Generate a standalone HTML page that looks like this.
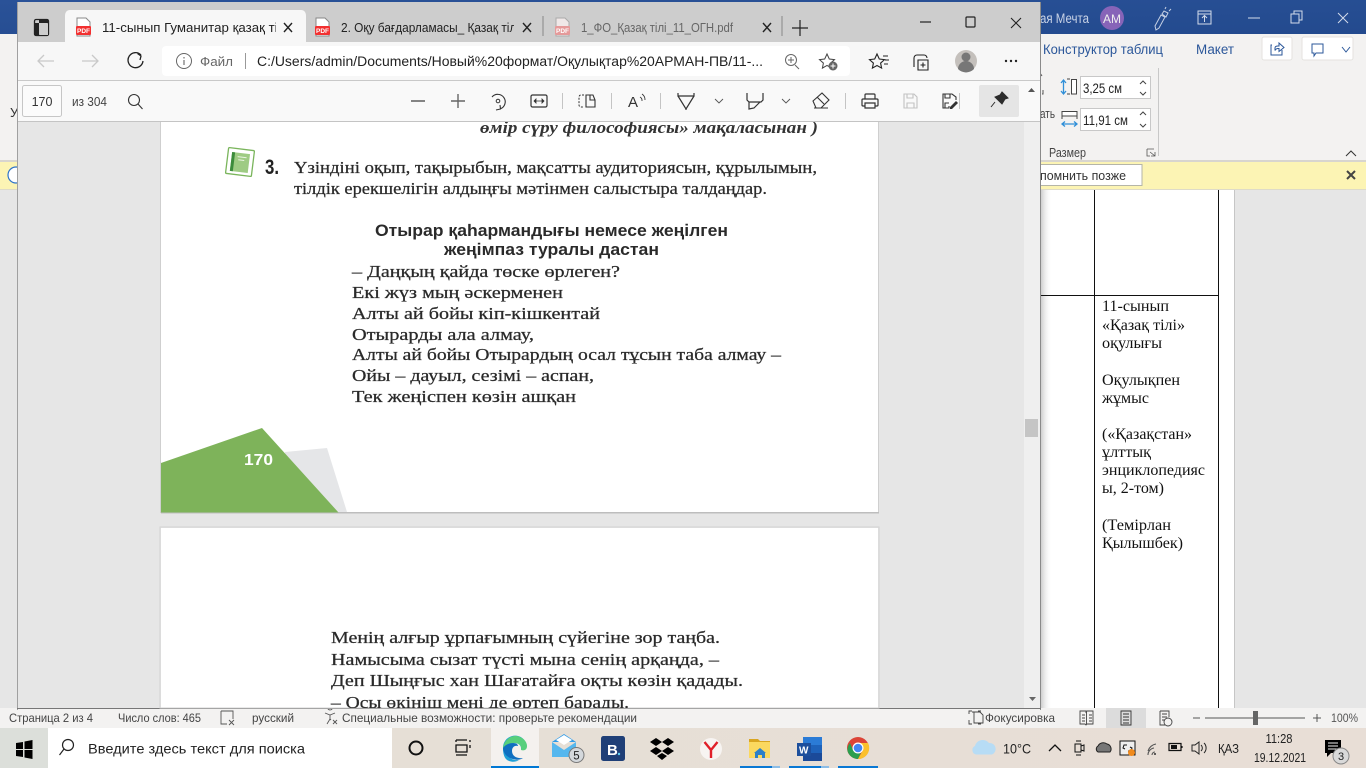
<!DOCTYPE html>
<html><head><meta charset="utf-8"><style>
html,body{margin:0;padding:0;width:1366px;height:768px;overflow:hidden;background:#e6e6e6}
svg{display:block}
text{font-family:"Liberation Sans","Noto Sans CJK SC",sans-serif;white-space:pre}
.s{font-family:"Liberation Serif",serif}
.b{font-family:"Liberation Serif",serif;font-size:17px;fill:#2a2a2a;stroke:#2a2a2a;stroke-width:.25}
.c{font-family:"Liberation Serif",serif;font-size:15.500px;fill:#111}
</style></head><body>
<svg width="1366" height="768" viewBox="0 0 1366 768" xmlns="http://www.w3.org/2000/svg">
<defs>
<clipPath id="c1"><rect x="100" y="10" width="176" height="34"/></clipPath>
<clipPath id="c2"><rect x="340" y="10" width="174" height="34"/></clipPath>
<clipPath id="c3"><rect x="161" y="122" width="717" height="586"/></clipPath>
<linearGradient id="tb" x1="0" x2="1" y1="0" y2="0"><stop offset="0" stop-color="#d9dcd8"/><stop offset=".3" stop-color="#e6dfd6"/><stop offset="1" stop-color="#e8ded6"/></linearGradient>
<linearGradient id="sh" x1="0" x2="1" y1="0" y2="0"><stop offset="0" stop-color="#c4c4c4"/><stop offset="1" stop-color="#fff" stop-opacity="0"/></linearGradient>
<linearGradient id="bl" x1="0" x2="1" y1="0" y2="1"><stop offset="0" stop-color="#2a5298"/><stop offset="1" stop-color="#234a8e"/></linearGradient>
</defs>

<!-- WORD BACKGROUND -->
<rect width="1366" height="34" fill="url(#bl)"/>
<rect y="34" width="1366" height="127" fill="#f3f2f1"/>
<rect y="160" width="1366" height="2" fill="#d8d5cf"/>
<rect y="162" width="1366" height="28" fill="#fcf4b4"/>
<rect y="190" width="1366" height="518" fill="#e6e6e6"/>
<rect y="189" width="1366" height="1" fill="#dedbc8"/>
<text x="10" y="117" font-size="13" fill="#333">У</text>
<circle cx="16" cy="175" r="8" fill="#fff" stroke="#2f74c8" stroke-width="1.200"/>

<text x="1040" y="23" font-size="13.500" fill="#c9d3e6" textLength="49" lengthAdjust="spacingAndGlyphs">ая Мечта</text>
<circle cx="1112" cy="18" r="12" fill="#8764b8"/>
<text x="1112" y="23" font-size="12" fill="#eee" text-anchor="middle">АМ</text>
<path d="M1156 30l-1-4 6-11 4 2-6 11zM1162 14l2-3 4 2-2 4zM1165 9l1-2M1169 11l2-2" fill="none" stroke="#c5d0e4" stroke-width="1"/>
<path d="M1198 11h13v13h-13zM1198 14h13M1204.500 22v-6M1202 18l2.500-2.500 2.500 2.500" fill="none" stroke="#d3dbea" stroke-width="1"/>
<path d="M1248 18h12" stroke="#d3dbea" stroke-width="1"/>
<path d="M1291 14h8v9h-8zM1294 14v-3h8v9h-3" fill="none" stroke="#d3dbea" stroke-width="1"/>
<path d="M1338 13l10 10M1348 13l-10 10" stroke="#d3dbea" stroke-width="1"/>

<text x="1043" y="54" font-size="13.500" fill="#2b579a" textLength="120" lengthAdjust="spacingAndGlyphs">Конструктор таблиц</text>
<text x="1196" y="54" font-size="13.500" fill="#2b579a" textLength="38" lengthAdjust="spacingAndGlyphs">Макет</text>
<rect x="1262" y="37" width="30" height="23" rx="2" fill="#fff" stroke="#e4e2df"/>
<path d="M1272 45h-1v10h11v-5M1275 50v-2q0-2 3-2h1v-3l5 4.500-5 4v-3h-1q-2 0-3 2z" fill="none" stroke="#2b579a" stroke-width="1"/>
<rect x="1302" y="37" width="51" height="23" rx="2" fill="#fff" stroke="#e4e2df"/>
<path d="M1312 44h11v9h-7l-2 3v-3h-2z" fill="none" stroke="#2b579a" stroke-width="1"/>
<path d="M1342 47l4 5 4-5" fill="none" stroke="#2b579a" stroke-width="1"/>

<path d="M1040 73l2 3M1042 94h1v-4" fill="none" stroke="#555"/>
<path d="M1063.500 80v14M1061 83l2.500-3 2.500 3M1061 91l2.500 3 2.500-3" fill="none" stroke="#2f8fd8" stroke-width="1.300"/>
<path d="M1067 79h3M1067 94h3" stroke="#444"/>
<rect x="1071.500" y="79.500" width="5" height="14.500" fill="#fff" stroke="#444"/>
<rect x="1080.500" y="76.500" width="70" height="22" fill="#fff" stroke="#c8c8c8"/>
<text x="1083" y="93" font-size="13.500" fill="#222" textLength="39" lengthAdjust="spacingAndGlyphs">3,25 см</text>
<path d="M1140 84l3-3 3 3M1140 92l3 3 3-3" fill="none" stroke="#444"/>
<text x="1040" y="118" font-size="13" fill="#444" textLength="15" lengthAdjust="spacingAndGlyphs">ать</text>
<rect x="1062" y="111.500" width="15" height="4.500" fill="#fff" stroke="#444"/>
<path d="M1062 116v3M1077 116v3" stroke="#444"/>
<path d="M1062 124h15M1065 121.500l-3 2.500 3 2.500M1074 121.500l3 2.500-3 2.500" fill="none" stroke="#2f8fd8" stroke-width="1.300"/>
<rect x="1080.500" y="108.500" width="70" height="22" fill="#fff" stroke="#c8c8c8"/>
<text x="1083" y="125" font-size="13.500" fill="#222" textLength="45" lengthAdjust="spacingAndGlyphs">11,91 см</text>
<path d="M1140 115l3-3 3 3M1140 124l3 3 3-3" fill="none" stroke="#444"/>
<path d="M1158.500 68v88" stroke="#c8c8c8"/>
<text x="1049" y="157" font-size="12.500" fill="#444" textLength="37" lengthAdjust="spacingAndGlyphs">Размер</text>
<path d="M1147 149h7M1147 149v7h3M1150 152l5 4M1155 152v4h-4" fill="none" stroke="#555" stroke-width=".8"/>
<path d="M1346 156l5-5 5 5" fill="none" stroke="#333"/>
<rect x="1030" y="164.500" width="112" height="21" fill="#fff" stroke="#b5b5a8"/>
<text x="1040" y="180" font-size="12.500" fill="#333" textLength="86" lengthAdjust="spacingAndGlyphs">помнить позже</text>
<path d="M1347 171l8 8M1355 171l-8 8" stroke="#444" stroke-width="2"/>

<rect x="1040" y="190" width="195" height="518" fill="#fff"/>
<rect x="1040" y="190" width="12" height="518" fill="url(#sh)"/>
<rect x="1234" y="190" width="1" height="518" fill="#c6c6c6"/>
<path d="M1094.500 190v518M1218.500 190v518" stroke="#111" stroke-width="1"/>
<path d="M1040 295.500h178" stroke="#111" stroke-width="1"/>
<text class="c" x="1102" y="311" textLength="67" lengthAdjust="spacingAndGlyphs">11-сынып</text>
<text class="c" x="1102" y="330" textLength="83" lengthAdjust="spacingAndGlyphs">«Қазақ тілі»</text>
<text class="c" x="1102" y="348" textLength="60" lengthAdjust="spacingAndGlyphs">оқулығы</text>
<text class="c" x="1102" y="385" textLength="78" lengthAdjust="spacingAndGlyphs">Оқулықпен</text>
<text class="c" x="1102" y="403" textLength="47" lengthAdjust="spacingAndGlyphs">жұмыс</text>
<text class="c" x="1102" y="439" textLength="90" lengthAdjust="spacingAndGlyphs">(«Қазақстан»</text>
<text class="c" x="1102" y="457" textLength="49" lengthAdjust="spacingAndGlyphs">ұлттық</text>
<text class="c" x="1102" y="475" textLength="103" lengthAdjust="spacingAndGlyphs">энциклопедияс</text>
<text class="c" x="1102" y="493" textLength="62" lengthAdjust="spacingAndGlyphs">ы, 2-том)</text>
<text class="c" x="1102" y="530" textLength="69" lengthAdjust="spacingAndGlyphs">(Темірлан</text>
<text class="c" x="1102" y="548" textLength="81" lengthAdjust="spacingAndGlyphs">Қылышбек)</text>

<!-- STATUS BAR -->
<rect y="708" width="1366" height="20" fill="#f3f2f1"/>
<text x="9" y="722" font-size="12" fill="#444" textLength="84" lengthAdjust="spacingAndGlyphs">Страница 2 из 4</text>
<text x="118" y="722" font-size="12" fill="#444" textLength="83" lengthAdjust="spacingAndGlyphs">Число слов: 465</text>
<path d="M221 711h12v8M221 711v13h6M229 720l5 5M234 720l-5 5" fill="none" stroke="#555" stroke-width=".9"/>
<text x="252" y="722" font-size="12" fill="#444" textLength="42" lengthAdjust="spacingAndGlyphs">русский</text>
<path d="M330 710a2.500 2.500 0 1 1 .1 0M325 713l5 2 5-2M330 715v4l-3 5M330 719l1 1M333 720l4 4M337 720l-4 4" fill="none" stroke="#555" stroke-width=".9"/>
<text x="342" y="722" font-size="12" fill="#444" textLength="295" lengthAdjust="spacingAndGlyphs">Специальные возможности: проверьте рекомендации</text>
<path d="M969 714v-3h3M969 720v4h3M981 711h-3M981 724h-3M972 712h8l3 3v8h-9v-11" fill="none" stroke="#444" stroke-width=".9"/>
<text x="985" y="722" font-size="12" fill="#444" textLength="70" lengthAdjust="spacingAndGlyphs">Фокусировка</text>
<path d="M1080 711h6v1l1-1h6v13h-6l-1 1-1-1h-5zM1086.500 712v12M1082 715h3M1082 718h3M1082 721h3M1089 715h3M1089 718h3M1089 721h3" fill="none" stroke="#444" stroke-width=".9"/>
<rect x="1106" y="708" width="40" height="20" fill="#dcdcdc"/>
<path d="M1121 711h10v14h-10zM1123 714h6M1123 717h6M1123 720h6M1123 723h6" fill="none" stroke="#333" stroke-width=".9"/>
<path d="M1160 711h9v6M1160 711v14h5M1162 714h5M1162 717h5M1162 720h3" fill="none" stroke="#444" stroke-width=".9"/>
<circle cx="1168" cy="722" r="4" fill="none" stroke="#444" stroke-width=".9"/>
<path d="M1193 718h7M1205 718h100" stroke="#555"/>
<rect x="1253" y="711" width="5" height="14" fill="#666"/>
<path d="M1313 718h8M1317 714v8" stroke="#555"/>
<text x="1331" y="722" font-size="12" fill="#555" textLength="27" lengthAdjust="spacingAndGlyphs">100%</text>

<!-- TASKBAR -->
<rect y="728" width="1366" height="40" fill="url(#tb)"/>
<rect x="0" y="728" width="48" height="40" fill="#dcdfda"/>
<path d="M16 743l7-1v7h-7zM24.500 741.500l8-1.500v9h-8zM16 750h7v7l-7-1zM24.500 750h8v9l-8-1.500z" fill="#000"/>
<rect x="48" y="728" width="344" height="40" fill="#fff"/>
<circle cx="68" cy="745" r="5.500" fill="none" stroke="#222" stroke-width="1.200"/>
<path d="M64 749l-4.500 6" stroke="#222" stroke-width="1.200"/>
<text x="88" y="753.500" font-size="14" fill="#222" textLength="217" lengthAdjust="spacingAndGlyphs">Введите здесь текст для поиска</text>
<circle cx="416" cy="748" r="6.500" fill="none" stroke="#111" stroke-width="2"/>
<path d="M456 740h11M456 755h11M456 745h11v7h-11zM470 740v2M470 745v3M456 740v2" fill="none" stroke="#111" stroke-width="1.300"/>
<rect x="491" y="728" width="48" height="40" fill="#f4f1ee"/>
<rect x="491" y="766" width="48" height="2" fill="#0078d4"/>
<path d="M503 748a12 12 0 0 1 22-7c3 4 2 9-2 9-2 0-2-1-2-2 0-3-3-5-7-5-5 0-8 3-8 7 0 6 6 11 13 10-3 2-6 2-8 1.500-7-1-8-8-8-13.500z" fill="#1f9fd6"/>
<path d="M503 748c1-8 8-13 14-12 5 1 10 5 10 10 0 4-3 5-6 4 1-4-2-7-6-7-5 0-9 2-12 5z" fill="#57cf7c"/>
<path d="M503 748c2-3 6-5 10-5 4 0 5 2 5 3-3-1-6 1-6 5 0 5 5 8 11 7-3 2-6 2-8 1.500-7-1-12-6-12-11.500z" fill="#0f6fc0"/>
<path d="M552 742l12-8 12 8z" fill="#2f9be8"/>
<path d="M552 742v15h24v-15l-12 8z" fill="#55b7ee"/>
<path d="M556 740l8-5 8 5-8 5z" fill="#fff"/>
<circle cx="576.500" cy="755" r="7.500" fill="#d4d8dc" stroke="#777"/>
<text x="576.500" y="759.500" font-size="11.500" fill="#222" text-anchor="middle">5</text>
<rect x="601" y="736" width="24" height="25" rx="2.500" fill="#1f3f77"/>
<text x="607" y="755" font-size="15" font-weight="bold" fill="#fff">B</text><circle cx="619" cy="754" r="1.200" fill="#5fd0f5"/>
<path d="M656 738l6 4-6 4-6-4zM668 738l6 4-6 4-6-4zM656 747l6 4-6 4-6-4zM668 747l6 4-6 4-6-4zM662 753l5 3-5 4-5-4z" fill="#000"/>
<circle cx="711" cy="749" r="11" fill="#f7f4f2"/>
<path d="M704.500 742l6.500 8 6.500-8M711 750v8" fill="none" stroke="#e0202a" stroke-width="2.400"/>
<rect x="740" y="766" width="40" height="2" fill="#0a78d4"/><rect x="772" y="766" width="8" height="2" fill="#8dbde6"/>
<path d="M749 739h9l2 2h10v5h-21z" fill="#d9a520"/>
<path d="M749 742h21v16h-21z" fill="#fbd85f"/>
<path d="M755 758v-5h-1l6-5 6 5h-1v5h-3v-3h-4v3z" fill="#2c7fc8"/>
<rect x="789" y="766" width="40" height="2" fill="#0a78d4"/><rect x="821" y="766" width="8" height="2" fill="#8dbde6"/>
<rect x="803" y="737" width="19" height="24" fill="#2b7bd6"/><rect x="803" y="753" width="19" height="8" fill="#1b4a99"/><rect x="803" y="745" width="19" height="8" fill="#1e62ba"/>
<rect x="797" y="743" width="14" height="13" fill="#1d4f9c"/><text x="799" y="753.500" font-size="10" font-weight="bold" fill="#fff">W</text>
<rect x="838" y="766" width="40" height="2" fill="#0a78d4"/>
<circle cx="858" cy="748" r="11" fill="#dc4437"/>
<path d="M847.500 751a11 11 0 0 0 10.500 8l5-11h-5l-5 2-3-7a11 11 0 0 0-2.500 8z" fill="#2a9e4f"/>
<path d="M858 743h10a11 11 0 0 1-10 16l5-9z" fill="#fbc02d"/>
<circle cx="858" cy="748" r="5.500" fill="#fff"/><circle cx="858" cy="748" r="4.300" fill="#4285f4"/>
<path d="M976 754.500a4.500 4.500 0 0 1-1-8.500 8 8 0 0 1 14-3 6 6 0 0 1 3 11.500z" fill="#b7dcf5"/>
<text x="1003" y="753.500" font-size="14" fill="#222" textLength="28" lengthAdjust="spacingAndGlyphs">10°C</text>
<path d="M1049 751l6-6 6 6" fill="none" stroke="#111" stroke-width="1.300"/>
<path d="M1075 744h6v8h-6zM1081 746l3-1v6l-3-1M1076 741h5M1076 755h5" fill="none" stroke="#111" stroke-width="1"/>
<path d="M1098 752a3.500 3.500 0 0 1 0-6 6 6 0 0 1 9-2 5 5 0 0 1 3 8z" fill="#777" stroke="#222"/>
<path d="M1120 741h15v14h-15z" fill="#eee" stroke="#111"/>
<path d="M1127 745h-3l-1 3 2 1M1128 751h3l1-3-2-1" fill="none" stroke="#111"/>
<circle cx="1131.500" cy="752.500" r="3.500" fill="#f08a1d"/>
<path d="M1148 755a7 7 0 0 1 6-7M1148 751a10 10 0 0 1 8-7M1152 755a3 3 0 0 1 3-3" fill="none" stroke="#555" stroke-width="1.100"/>
<circle cx="1155" cy="754" r="1" fill="#333"/>
<path d="M1169 743.500h12v7h-12zM1182 746v2" fill="none" stroke="#111" stroke-width="1.200"/><rect x="1171" y="745" width="6" height="4" fill="#111"/>
<path d="M1192 745h3l4-3v12l-4-3h-3zM1201 745a4 4 0 0 1 0 6M1204 743a7 7 0 0 1 0 10" fill="none" stroke="#222" stroke-width="1"/>
<text x="1218" y="753" font-size="13" fill="#222" textLength="21" lengthAdjust="spacingAndGlyphs">ҚАЗ</text>
<text x="1279" y="743" font-size="12.500" fill="#222" text-anchor="middle" textLength="27" lengthAdjust="spacingAndGlyphs">11:28</text>
<text x="1280" y="762" font-size="12.500" fill="#222" text-anchor="middle" textLength="52" lengthAdjust="spacingAndGlyphs">19.12.2021</text>
<path d="M1325 740h16v13h-10l-4 4v-4h-2z" fill="#000"/>
<path d="M1328 743h10M1328 746h10M1328 749h10" stroke="#eee"/>
<circle cx="1341" cy="756" r="8" fill="#d9d9d9" stroke="#888"/>
<text x="1341" y="760" font-size="11" fill="#222" text-anchor="middle">3</text>

<!-- BROWSER WINDOW -->
<rect x="17.500" y="2" width="1023" height="707" fill="#e6e6e6"/>
<rect x="18" y="2" width="1022" height="40" fill="#cdcdcd"/>
<rect x="34.500" y="19.500" width="14" height="16" rx="1.500" fill="none" stroke="#222" stroke-width="1.300"/>
<path d="M35 19.500h13v3.500h-13zM35 20v15h4V20z" fill="#222"/>
<rect x="40" y="24" width="8" height="11" fill="#cdcdcd"/>
<path d="M65 42c0 0 0-1 0-26 0-4 2-6 5-6h231c3 0 5 2 5 6v26z" fill="#f7f7f7"/>
<path d="M77 18h9l4 4v14H77z" fill="#fff" stroke="#888"/><rect x="76" y="26" width="15" height="9" rx="1" fill="#f23030"/>
<text x="83.500" y="33" font-size="6.500" font-weight="bold" fill="#fff" text-anchor="middle">PDF</text>
<g clip-path="url(#c1)"><text x="102" y="32" font-size="12.800" fill="#222" textLength="190" lengthAdjust="spacingAndGlyphs">11-сынып Гуманитар қазақ тілі.</text></g>
<path d="M284 23l8 9M292 23l-8 9" stroke="#222" stroke-width="1.400"/>
<path d="M316 18h9l4 4v14h-13z" fill="#fff" stroke="#888"/><rect x="315" y="26" width="15" height="9" rx="1" fill="#f23030"/>
<text x="322.500" y="33" font-size="6.500" font-weight="bold" fill="#fff" text-anchor="middle">PDF</text>
<g clip-path="url(#c2)"><text x="341" y="32" font-size="12.800" fill="#222" textLength="178" lengthAdjust="spacingAndGlyphs">2. Оқу бағдарламасы_ Қазақ тілі</text></g>
<path d="M523 23l8 9M531 23l-8 9" stroke="#222" stroke-width="1.400"/>
<path d="M543 16v20" stroke="#888"/>
<path d="M556 18h9l4 4v14h-13z" fill="#f0e8e8" stroke="#aaa"/><rect x="555" y="26" width="15" height="9" rx="1" fill="#e59a9a"/>
<text x="562.500" y="33" font-size="6.500" font-weight="bold" fill="#fff" text-anchor="middle">PDF</text>
<text x="581" y="32" font-size="13" fill="#666" textLength="152" lengthAdjust="spacingAndGlyphs">1_ФО_Қазақ тілі_11_ОГН.pdf</text>
<path d="M763 23l8 9M771 23l-8 9" stroke="#222" stroke-width="1.400"/>
<path d="M782 16v20" stroke="#888"/>
<path d="M800 20v16M792 28h16" stroke="#222" stroke-width="1.200"/>
<path d="M920 22h11" stroke="#222" stroke-width="1.200"/>
<rect x="966" y="17" width="9" height="10" rx="1" fill="none" stroke="#222" stroke-width="1.200"/>
<path d="M1011 18l10 10M1021 18l-10 10" stroke="#222" stroke-width="1.100"/>

<rect x="18" y="42" width="1022" height="39" fill="#f7f7f7"/>
<rect x="18" y="80" width="1022" height="1" fill="#c9c9c9"/>
<path d="M38 61h16M44 55l-6 6 6 6" fill="none" stroke="#c9c9c9" stroke-width="1.300"/>
<path d="M82 61h16M92 55l6 6-6 6" fill="none" stroke="#c9c9c9" stroke-width="1.300"/>
<path d="M141 55a7.500 7.500 0 1 0 2 6M137.500 53.500l3.500 2.500-1 4" fill="none" stroke="#222" stroke-width="1.300"/>
<rect x="162" y="46" width="688" height="30" rx="4" fill="#fff"/>
<circle cx="184" cy="61" r="7.500" fill="none" stroke="#666"/><path d="M184 60v5M184 57v1.500" stroke="#666" stroke-width="1.100"/>
<text x="200" y="66" font-size="13" fill="#666" textLength="33" lengthAdjust="spacingAndGlyphs">Файл</text>
<path d="M245.500 53v16" stroke="#999"/>
<text x="257" y="66" font-size="13.500" fill="#222" textLength="506" lengthAdjust="spacingAndGlyphs">C:/Users/admin/Documents/Новый%20формат/Оқулықтар%20АРМАН-ПВ/11-...</text>
<circle cx="791" cy="60" r="5.500" fill="none" stroke="#666"/><path d="M795 65l4 4M788 60h6M791 57v6" stroke="#666"/>
<path d="M827 54l2.300 5 5.200.6-3.900 3.500 1 5-4.600-2.600-4.600 2.600 1-5-3.900-3.500 5.200-.6z" fill="none" stroke="#444"/>
<circle cx="833" cy="66" r="4.500" fill="#666"/><path d="M830.500 66h5M833 63.500v5" stroke="#fff"/>
<path d="M877 54l2.300 5 5.200.6-3.900 3.500 1 5-4.600-2.600-4.600 2.600 1-5-3.900-3.500 5.200-.6zM883 56h5M885 60h4M884 64h4" fill="none" stroke="#222" stroke-width="1.100"/>
<path d="M914 67v-9a3 3 0 0 1 3-3h7a3 3 0 0 1 3 3M918 60h10v10h-10zM923 62.500v5M920.500 65h5" fill="none" stroke="#222" stroke-width="1.100"/>
<circle cx="966" cy="61" r="11" fill="#c4c0bc"/>
<circle cx="966" cy="57" r="4.500" fill="#777"/><path d="M958 69a8 8 0 0 1 16 0 11 11 0 0 1-16 0z" fill="#777"/>
<circle cx="1006" cy="61" r="1.200" fill="#222"/><circle cx="1011" cy="61" r="1.200" fill="#222"/><circle cx="1016" cy="61" r="1.200" fill="#222"/>

<!-- PDF TOOLBAR -->
<rect x="18" y="81" width="1022" height="40" fill="#f9f9f9"/>
<rect x="18" y="121" width="1022" height="1" fill="#c4c4c4"/>
<rect x="22.500" y="85.500" width="39" height="31" rx="2" fill="#fbfbfb" stroke="#c6c6c6"/>
<text x="42" y="106" font-size="12.500" fill="#333" text-anchor="middle">170</text>
<text x="72" y="106" font-size="12.500" fill="#444" textLength="35" lengthAdjust="spacingAndGlyphs">из 304</text>
<circle cx="134" cy="100" r="5.500" fill="none" stroke="#333" stroke-width="1.100"/><path d="M138 104l4.500 5" stroke="#333" stroke-width="1.100"/>
<path d="M411 101h14" stroke="#666" stroke-width="1.600"/>
<path d="M451 101h14M458 94v14" stroke="#666" stroke-width="1.400"/>
<path d="M492 97a7.500 7.500 0 1 1 8 12M500 105l.5 4-4.500 1" fill="none" stroke="#333" stroke-width="1.100"/>
<circle cx="498" cy="101" r="1.800" fill="none" stroke="#333"/>
<rect x="531" y="95" width="16" height="12" rx="1.500" fill="none" stroke="#333" stroke-width="1.200"/>
<path d="M534 101h10M534 101l2-2v4zM544 101l-2-2v4z" fill="#333" stroke="#333" stroke-width=".8"/>
<path d="M562.500 93v16M611.500 93v16M660.500 93v16M845.500 93v16M959.500 93v16" stroke="#c4c4c4"/>
<path d="M584 95h-3a2 2 0 0 0-2 2v8a2 2 0 0 0 2 2h3" fill="none" stroke="#333" stroke-dasharray="2 1.400"/>
<path d="M586 95h7l2 5v7h-9zM590 95v5h5" fill="none" stroke="#333" stroke-width="1.100"/>
<text x="628" y="107" font-size="15" fill="#333">A</text>
<path d="M640 97a4 4 0 0 1 2 4M642 94a7 7 0 0 1 3 6" fill="none" stroke="#333" stroke-width=".9"/>
<path d="M678 93v3h16v-3M678 96l8 13 8-13M686 109v1" fill="none" stroke="#333" stroke-width="1.200"/>
<path d="M715 99l4 4 4-4M782 99l4 4 4-4" fill="none" stroke="#555" stroke-width=".9"/>
<path d="M747 93v7l2 2h12l2-2v-7M749 102v7l5-1 6-6" fill="none" stroke="#333" stroke-width="1.200"/>
<path d="M813 101l9-8 7 7-8 8h-5zM817 97l7 7M814 108h14" fill="none" stroke="#333" stroke-width="1.100"/>
<path d="M865 99v-4a1 1 0 0 1 1-1h8a1 1 0 0 1 1 1v4M865 106h-2a1 1 0 0 1-1-1v-5a1 1 0 0 1 1-1h14a1 1 0 0 1 1 1v5a1 1 0 0 1-1 1h-2M865 103h10v5h-10z" fill="none" stroke="#333" stroke-width="1.200"/>
<path d="M904 94h10l3 3v11h-13zM907 94v4h6v-4M907 108v-5h7v5" fill="none" stroke="#c2c2c2" stroke-width="1.100"/>
<path d="M949 106v2h-6v-14h9l4 3v3M945 94v4h5v-4M945 108v-5h4" fill="none" stroke="#333" stroke-width="1.100"/>
<path d="M950 107l6-6 2 2-6 6h-2z" fill="#333"/>
<rect x="979" y="85" width="40" height="32" rx="2" fill="#e5e5e5"/>
<path d="M1002 92l6 6-3 1-3 5-7-7 5-2zM995 102l-4 5" fill="#2c2c2c" stroke="#2c2c2c" stroke-width="1"/>

<!-- PDF AREA -->
<rect x="18" y="122" width="1006" height="586" fill="#e6e6e6"/>
<rect x="1024" y="122" width="16" height="586" fill="#efefef"/>
<rect x="1024" y="81" width="16" height="40" fill="#f9f9f9"/>
<path d="M1028 92l3.500-4 3.500 4z" fill="#555"/>
<path d="M1029 697l3.500 4 3.500-4z" fill="#666"/>
<rect x="1025" y="419" width="13" height="18" fill="#c5c5c5"/>
<rect x="1040" y="2" width="1" height="708" fill="#8a8a8a"/>
<rect x="17" y="2" width="1" height="708" fill="#a0a0a0"/>
<rect x="17" y="708" width="1024" height="1" fill="#777"/>

<rect x="161" y="122" width="717" height="390.500" fill="#fff"/>
<rect x="160" y="122" width="1" height="391" fill="#cfcfcf"/>
<rect x="878" y="122" width="1" height="391" fill="#cfcfcf"/>
<rect x="161" y="512" width="718" height="1.500" fill="#bdbdbd"/>
<rect x="161" y="528" width="717" height="180" fill="#fff"/>
<rect x="160" y="527" width="719" height="181" fill="none" stroke="#d3d3d3"/>

<g clip-path="url(#c3)">
<text x="480" y="133" class="s" font-size="16.500" font-style="italic" font-weight="bold" fill="#333" textLength="338" lengthAdjust="spacingAndGlyphs">өмір сүру философиясы» мақаласынан )</text>
</g>
<g transform="rotate(7 240 162)">
<rect x="227" y="149" width="26" height="26" fill="#fff" stroke="#7ab55c" stroke-width="1.300" rx="1"/>
<rect x="231" y="153" width="18" height="19" fill="#9ecb83"/>
<rect x="231" y="153" width="3" height="19" fill="#3c8b3b"/>
<path d="M237 157h9M238 160h6" stroke="#eaf5e2" stroke-width="1"/>
</g>
<text x="265" y="174" font-size="21" font-weight="bold" fill="#222" textLength="14" lengthAdjust="spacingAndGlyphs">3.</text>
<text class="b" x="294" y="173" textLength="523" lengthAdjust="spacingAndGlyphs">Үзіндіні оқып, тақырыбын, мақсатты аудиториясын, құрылымын,</text>
<text class="b" x="294" y="194" textLength="473" lengthAdjust="spacingAndGlyphs">тілдік ерекшелігін алдыңғы мәтінмен салыстыра талдаңдар.</text>
<text x="375" y="236" font-size="16.500" font-weight="bold" fill="#2a2a2a" textLength="353" lengthAdjust="spacingAndGlyphs">Отырар қаһармандығы немесе жеңілген</text>
<text x="444" y="255" font-size="16.500" font-weight="bold" fill="#2a2a2a" textLength="215" lengthAdjust="spacingAndGlyphs">жеңімпаз туралы дастан</text>
<text class="b" x="352" y="277" textLength="268" lengthAdjust="spacingAndGlyphs">– Даңқың қайда төске өрлеген?</text>
<text class="b" x="352" y="298" textLength="211" lengthAdjust="spacingAndGlyphs">Екі жүз мың әскерменен</text>
<text class="b" x="352" y="319" textLength="248" lengthAdjust="spacingAndGlyphs">Алты ай бойы кіп-кішкентай</text>
<text class="b" x="352" y="340" textLength="182" lengthAdjust="spacingAndGlyphs">Отырарды ала алмау,</text>
<text class="b" x="352" y="360" textLength="429" lengthAdjust="spacingAndGlyphs">Алты ай бойы Отырардың осал тұсын таба алмау –</text>
<text class="b" x="352" y="381" textLength="242" lengthAdjust="spacingAndGlyphs">Ойы – дауыл, сезімі – аспан,</text>
<text class="b" x="352" y="402" textLength="224" lengthAdjust="spacingAndGlyphs">Тек жеңіспен көзін ашқан</text>
<path d="M285 452l42-4 20 64h-60z" fill="#e5e6e8"/>
<path d="M161 463l101-35 76.500 84.500H161z" fill="#7eb35a"/>
<text x="244" y="465" font-size="16" font-weight="bold" fill="#fff" textLength="29" lengthAdjust="spacingAndGlyphs">170</text>
<g clip-path="url(#c3)">
<text class="b" x="331" y="643" textLength="389" lengthAdjust="spacingAndGlyphs">Менің алғыр ұрпағымның сүйегіне зор таңба.</text>
<text class="b" x="331" y="665" textLength="388" lengthAdjust="spacingAndGlyphs">Намысыма сызат түсті мына сенің арқаңда, –</text>
<text class="b" x="331" y="686" textLength="412" lengthAdjust="spacingAndGlyphs">Деп Шыңғыс хан Шағатайға оқты көзін қадады.</text>
<text class="b" x="331" y="708" textLength="298" lengthAdjust="spacingAndGlyphs">– Осы өкініш мені де өртеп барады.</text>
</g>
</svg>
</body></html>
